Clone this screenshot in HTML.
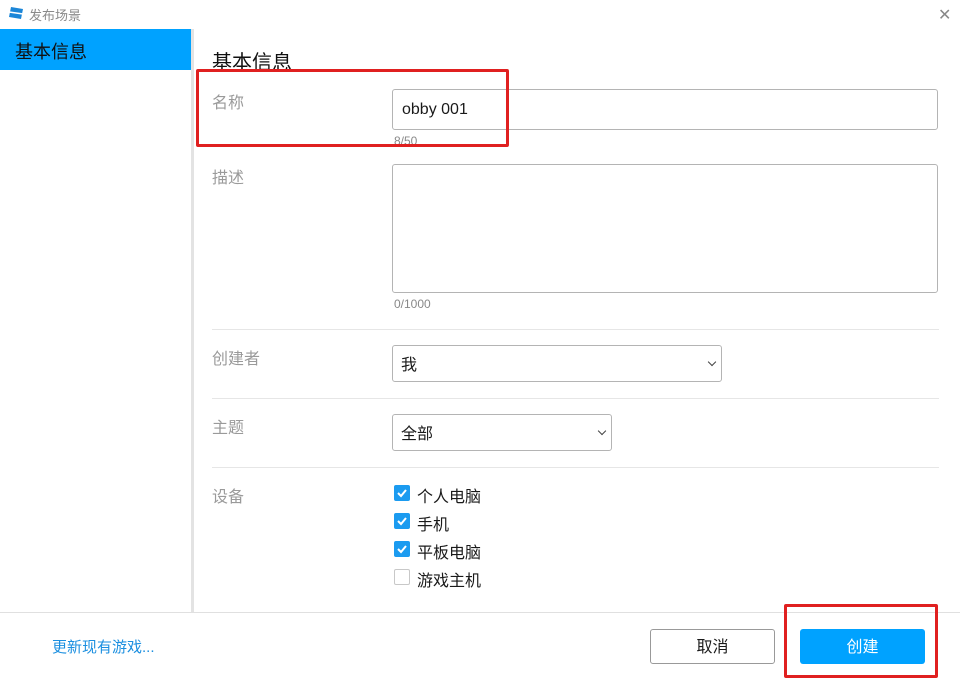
<!DOCTYPE html>
<html><head><meta charset="utf-8"><style>
*{box-sizing:border-box;margin:0;padding:0}
body{width:960px;height:679px;background:#fff;position:relative;overflow:hidden;font-family:"Liberation Sans","Noto Sans CJK SC",sans-serif;color:#1a1a1a}
.a{position:absolute}
.lbl{position:absolute;left:212px;font-size:16px;color:#9a9a9a}
.hr{position:absolute;left:212px;width:727px;height:1px;background:#e6e6e6}
.sel{position:absolute;left:392px;height:37px;border:1px solid #b4b4b4;border-radius:3px;font-size:16px;padding:5px 8px}
.chev{position:absolute;right:6px;top:13px;width:6px;height:6px;border-right:1.5px solid #444;border-bottom:1.5px solid #444;transform:rotate(45deg)}
.cb{position:absolute;left:394px;width:16px;height:16px;border-radius:2px;background:#1b9bf0}
.cb svg{position:absolute;left:2px;top:2px}
.cbt{position:absolute;left:417px;font-size:16px}
</style></head><body>
<svg class="a" style="left:8px;top:6px" width="16" height="14" viewBox="0 0 16 14"><path d="M3 1L15 3L13 13L1 11Z" fill="#1b86d8"/><path d="M1 6L15 8" stroke="#fff" stroke-width="1.5"/></svg>
<div class="a" style="left:29px;top:5px;font-size:13px;color:#8a8a8a">发布场景</div>
<div class="a" style="left:938px;top:5px;font-size:16px;color:#888">✕</div>
<div class="a" style="left:0;top:29px;width:191px;height:41px;background:#00a2ff"></div>
<div class="a" style="left:15px;top:38px;font-size:18px;color:#111">基本信息</div>
<div class="a" style="left:191px;top:29px;width:3px;height:584px;background:#e3e3e3"></div>
<div class="a" style="left:212px;top:46px;font-size:20px;color:#111">基本信息</div>
<div class="lbl" style="top:89px">名称</div>
<div class="a" style="left:392px;top:89px;width:546px;height:41px;border:1px solid #b4b4b4;border-radius:3px;font-size:16px;padding:11px 9px">obby 001</div>
<div class="a" style="left:394px;top:134px;font-size:12px;color:#888">8/50</div>
<div class="a" style="left:196px;top:69px;width:313px;height:78px;border:3px solid #e02020;border-radius:2px"></div>
<div class="lbl" style="top:164px">描述</div>
<div class="a" style="left:392px;top:164px;width:546px;height:129px;border:1px solid #b4b4b4;border-radius:3px"></div>
<div class="a" style="left:394px;top:297px;font-size:12px;color:#888">0/1000</div>
<div class="hr" style="top:329px"></div>
<div class="lbl" style="top:345px">创建者</div>
<div class="sel" style="top:345px;width:330px">我<div class="chev"></div></div>
<div class="hr" style="top:398px"></div>
<div class="lbl" style="top:414px">主题</div>
<div class="sel" style="top:414px;width:220px">全部<div class="chev"></div></div>
<div class="hr" style="top:467px"></div>
<div class="lbl" style="top:483px">设备</div>
<div class="cb" style="top:485px"><svg width="12" height="12" viewBox="0 0 12 12"><path d="M2 6L5 9L10 3" stroke="#fff" stroke-width="2" fill="none"/></svg></div><div class="cbt" style="top:483px">个人电脑</div>
<div class="cb" style="top:513px"><svg width="12" height="12" viewBox="0 0 12 12"><path d="M2 6L5 9L10 3" stroke="#fff" stroke-width="2" fill="none"/></svg></div><div class="cbt" style="top:511px">手机</div>
<div class="cb" style="top:541px"><svg width="12" height="12" viewBox="0 0 12 12"><path d="M2 6L5 9L10 3" stroke="#fff" stroke-width="2" fill="none"/></svg></div><div class="cbt" style="top:539px">平板电脑</div>
<div class="cb" style="top:569px;background:#fff;border:1px solid #c8c8c8"></div><div class="cbt" style="top:567px">游戏主机</div>
<div class="a" style="left:0;top:612px;width:960px;height:1px;background:#e0e0e0"></div>
<div class="a" style="left:52px;top:636px;font-size:15px;color:#1b8fe0">更新现有游戏...</div>
<div class="a" style="left:650px;top:629px;width:125px;height:35px;border:1px solid #999;border-radius:3px;font-size:16px;text-align:center;line-height:36px">取消</div>
<div class="a" style="left:800px;top:629px;width:125px;height:35px;background:#00a2ff;border-radius:3px;font-size:16px;text-align:center;line-height:38px;color:#fff">创建</div>
<div class="a" style="left:784px;top:604px;width:154px;height:74px;border:3px solid #e02020;border-radius:2px"></div>
</body></html>
